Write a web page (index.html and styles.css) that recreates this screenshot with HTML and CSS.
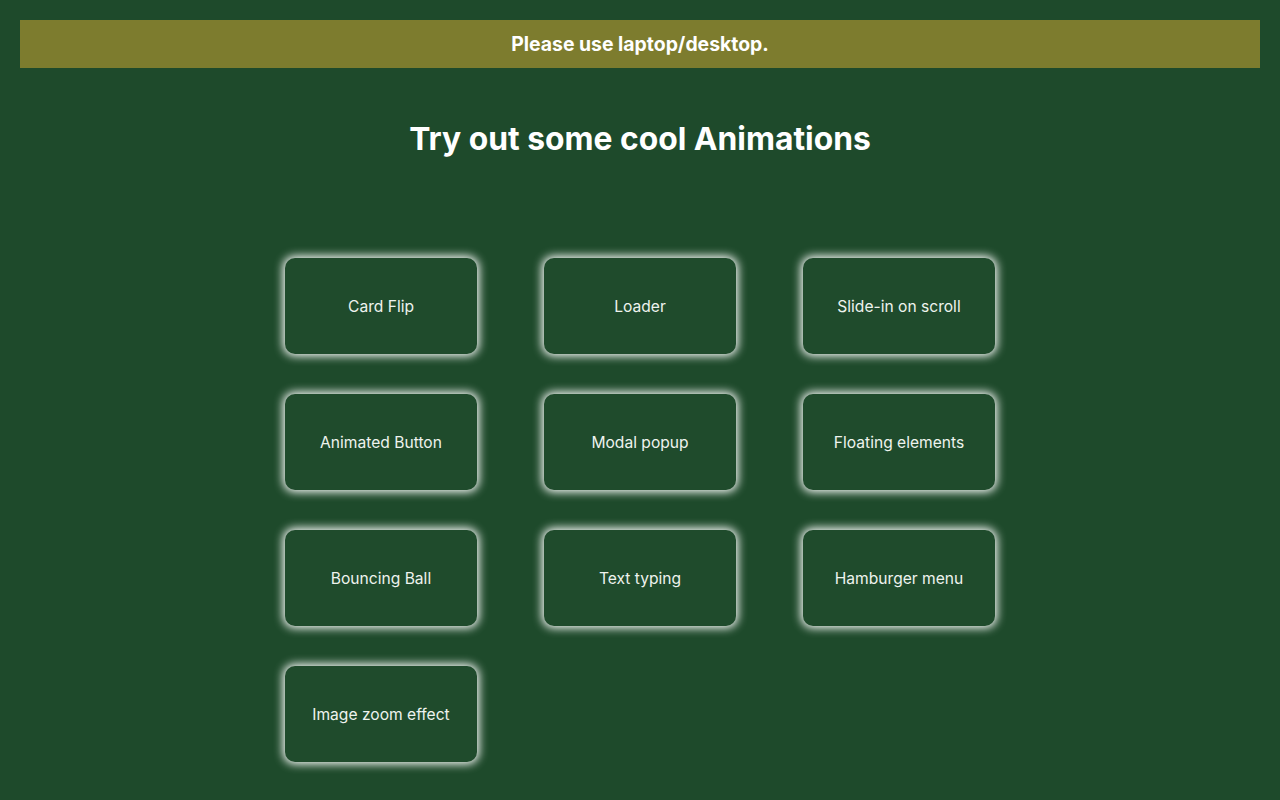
FILE: index.html
```html
<!DOCTYPE html>
<html lang="en">
<head>
<meta charset="utf-8">
<title>Animations</title>
<link rel="stylesheet" href="styles.css">
</head>
<body>
<div class="banner">Please use laptop/desktop.</div>
<h1 class="title">Try out some cool Animations</h1>
<main class="grid">
  <div class="card">Card Flip</div>
  <div class="card">Loader</div>
  <div class="card">Slide-in on scroll</div>
  <div class="card">Animated Button</div>
  <div class="card">Modal popup</div>
  <div class="card">Floating elements</div>
  <div class="card">Bouncing Ball</div>
  <div class="card">Text typing</div>
  <div class="card">Hamburger menu</div>
  <div class="card">Image zoom effect</div>
</main>
</body>
</html>
```

FILE: styles.css
```css
html, body {
  margin: 0;
  padding: 0;
}
body {
  background: #1e4a2b;
  font-family: Inter, "Noto Sans", sans-serif;
  color: #ffffff;
  padding: 20px;
  min-height: 800px;
  box-sizing: border-box;
}
.banner {
  background: #7d7c2e;
  height: 48px;
  display: flex;
  align-items: center;
  justify-content: center;
  font-weight: 700;
  font-size: 19.4px;
}
.title {
  margin: 51px 0 0;
  text-align: center;
  font-size: 31.8px;
  font-weight: 700;
  line-height: 40px;
}
.grid {
  margin: 99px auto 0;
  display: grid;
  grid-template-columns: repeat(3, 192px);
  column-gap: 67px;
  row-gap: 40px;
  justify-content: center;
}
.card {
  height: 96px;
  border-radius: 10px;
  background: #1f4b2c;
  box-shadow: 0 0 10px 2px #ffffff;
  display: flex;
  align-items: center;
  justify-content: center;
  font-size: 15.6px;
  color: #eef3ee;
}
```
